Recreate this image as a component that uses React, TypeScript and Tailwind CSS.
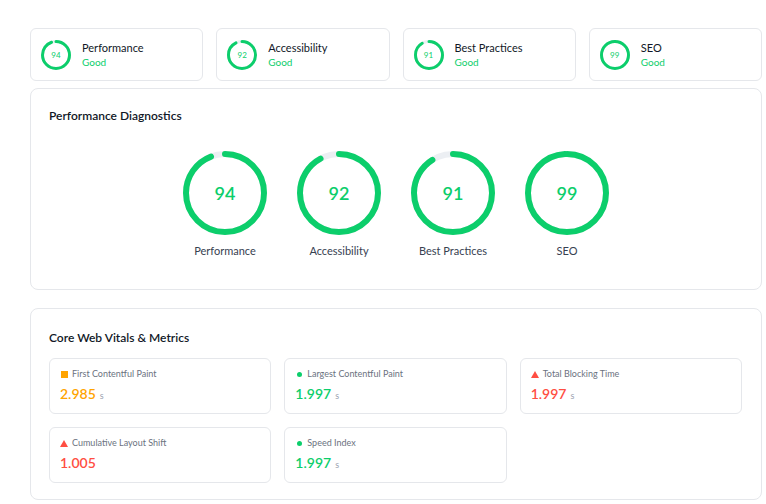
import React from "react";

const GREEN = "#0cce6b";

type Score = { label: string; score: number };

const SCORES: Score[] = [
  { label: "Performance", score: 94 },
  { label: "Accessibility", score: 92 },
  { label: "Best Practices", score: 91 },
  { label: "SEO", score: 99 },
];

type Metric = {
  label: string;
  value: string;
  unit?: string;
  level: "good" | "avg" | "bad";
};

const METRICS: Metric[] = [
  { label: "First Contentful Paint", value: "2.985", unit: "s", level: "avg" },
  { label: "Largest Contentful Paint", value: "1.997", unit: "s", level: "good" },
  { label: "Total Blocking Time", value: "1.997", unit: "s", level: "bad" },
  { label: "Cumulative Layout Shift", value: "1.005", level: "bad" },
  { label: "Speed Index", value: "1.997", unit: "s", level: "good" },
];

// ring gauge, arc starts at 12 o'clock and runs clockwise
function Ring({ size, stroke, score }: { size: number; stroke: number; score: number }) {
  const r = (size - stroke) / 2;
  const c = 2 * Math.PI * r;
  return (
    <svg width={size} height={size} className="-rotate-90">
      <circle cx={size / 2} cy={size / 2} r={r} fill="none" stroke="#eceff3" strokeWidth={stroke} />
      <circle
        cx={size / 2}
        cy={size / 2}
        r={r}
        fill="none"
        stroke={GREEN}
        strokeWidth={stroke}
        strokeLinecap="round"
        strokeDasharray={`${(c * score) / 100} ${c}`}
      />
    </svg>
  );
}

function LevelIcon({ level }: { level: Metric["level"] }) {
  if (level === "avg") return <span className="h-[7px] w-[7px] bg-[#ffa400]" />;
  if (level === "good") return <span className="h-[5px] w-[5px] rounded-full bg-[#0cce6b]" />;
  return (
    <svg width="8" height="7" viewBox="0 0 8 7">
      <polygon points="4,0 8,7 0,7" fill="#ff4e42" />
    </svg>
  );
}

const valueColor = {
  good: "text-[#0cce6b]",
  avg: "text-[#ffa400]",
  bad: "text-[#ff4e42]",
};

export default function App() {
  return (
    <div className="min-h-screen bg-white pl-[30px] pr-[4px] pt-[28px] font-['Lato',sans-serif] text-[#1f2937]">
      <div className="grid grid-cols-4 gap-[13px]">
        {SCORES.map((s) => (
          <div
            key={s.label}
            className="flex h-[53px] items-center gap-[11px] rounded-[6px] border border-[#e5e7eb] pl-[10px]"
          >
            <div className="relative h-[30px] w-[30px]">
              <Ring size={30} stroke={3} score={s.score} />
              <span className="absolute inset-0 flex items-center justify-center text-[8px] text-[#0cce6b]">
                {s.score}
              </span>
            </div>
            <div className="flex flex-col">
              <span className="text-[11px] leading-[14px] text-[#111827]">{s.label}</span>
              <span className="text-[10px] leading-[14px] text-[#0cce6b]">Good</span>
            </div>
          </div>
        ))}
      </div>

      <div className="mt-[7px] h-[202px] rounded-[8px] border border-[#e5e7eb] px-[18px] pt-[18px]">
        <h2 className="text-[12px] font-semibold leading-[18px] text-[#111827]">Performance Diagnostics</h2>
        <div className="mt-[26px] flex justify-center gap-[30px]">
          {SCORES.map((s) => (
            <div key={s.label} className="flex w-[84px] flex-col items-center">
              <div className="relative h-[84px] w-[84px]">
                <Ring size={84} stroke={6} score={s.score} />
                <span className="absolute inset-0 flex items-center justify-center text-[18px] font-semibold text-[#0cce6b]">
                  {s.score}
                </span>
              </div>
              <span className="mt-[8px] whitespace-nowrap text-[11px] leading-[16px] text-[#374151]">
                {s.label}
              </span>
            </div>
          ))}
        </div>
      </div>

      <div className="mt-[18px] h-[192px] rounded-[8px] border border-[#e5e7eb] px-[18px] pt-[20px]">
        <h2 className="text-[12px] font-semibold leading-[18px] text-[#111827]">Core Web Vitals &amp; Metrics</h2>
        <div className="mt-[11px] grid grid-cols-3 gap-x-[13px] gap-y-[13px] pr-[1px]">
          {METRICS.map((m) => (
            <div key={m.label} className="h-[56px] rounded-[6px] border border-[#e5e7eb] px-[10px] pt-[8px]">
              <div className="flex items-center gap-[4px]">
                <span className="flex w-[8px] justify-center">
                  <LevelIcon level={m.level} />
                </span>
                <span className="text-[9px] leading-[14px] text-[#6b7280]">{m.label}</span>
              </div>
              <div className="mt-[3px] flex items-baseline gap-[4px]">
                <span className={`text-[14px] font-semibold leading-[20px] ${valueColor[m.level]}`}>{m.value}</span>
                {m.unit && <span className="text-[9px] text-[#9ca3af]">{m.unit}</span>}
              </div>
            </div>
          ))}
        </div>
      </div>
    </div>
  );
}
